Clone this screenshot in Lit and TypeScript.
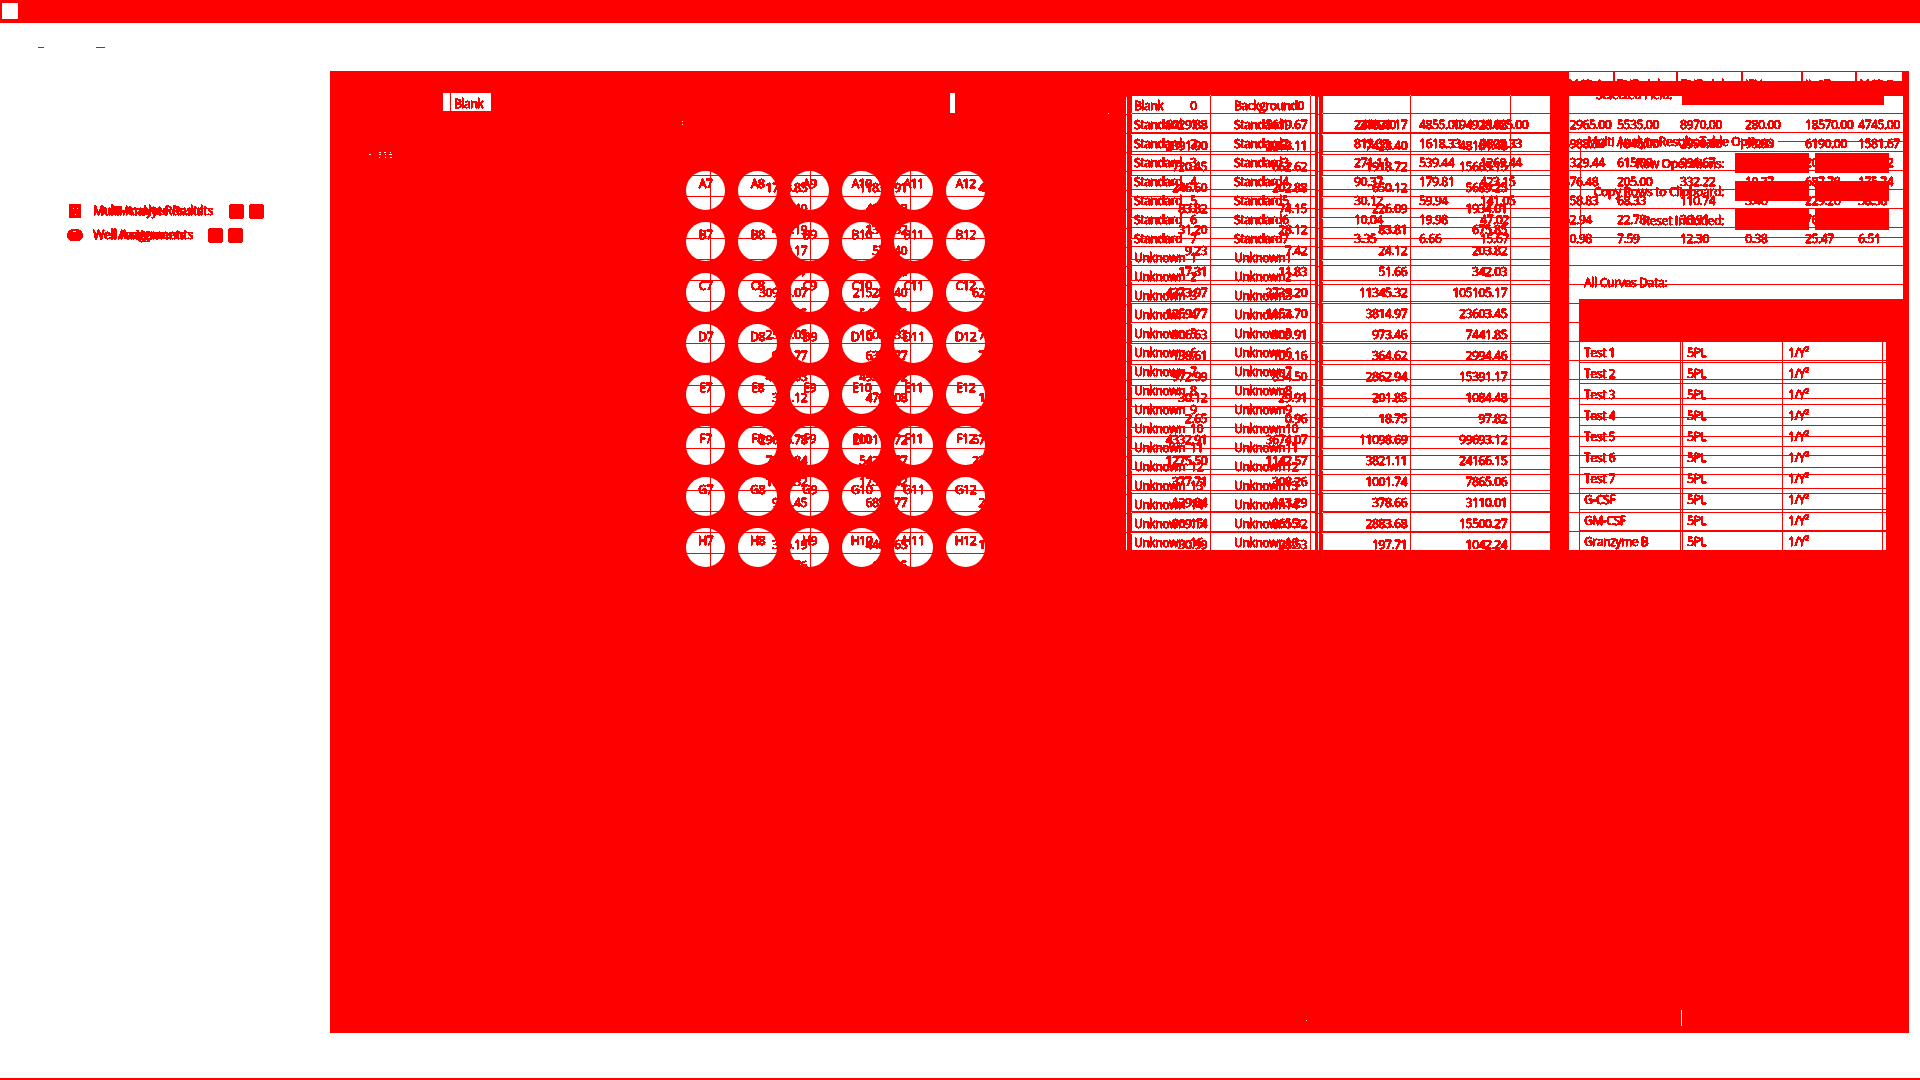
import { LitElement, html, css, svg } from "lit";
import { customElement } from "lit/decorators.js";

const SAMPLES: string[][] = [
  ["Blank", "0", "Background0"],
  ...Array.from({ length: 7 }, (_, i) => ["Standard", `${i + 1}`, `Standard${i + 1}`]),
  ...Array.from({ length: 16 }, (_, i) => ["Unknown", `${i + 1}`, `Unknown${i + 1}`]),
];

// Seven dilution rows, nine analytes each.
const DILUTIONS: string[][] = [
  ["2440.00", "4855.00", "11425.00", "12965.00", "5535.00", "8970.00", "280.00", "18570.00", "4745.00"],
  ["813.33", "1618.33", "3808.33", "4988.33", "1845.00", "2990.00", "93.33", "6190.00", "1581.67"],
  ["271.11", "539.44", "1269.44", "1329.44", "615.00", "996.67", "31.11", "2063.33", "527.22"],
  ["90.37", "179.81", "423.15", "476.48", "205.00", "332.22", "10.37", "687.78", "175.74"],
  ["30.12", "59.94", "141.05", "158.83", "68.33", "110.74", "3.46", "229.26", "58.58"],
  ["10.04", "19.98", "47.02", "52.94", "22.78", "36.91", "1.15", "76.42", "19.53"],
  ["3.35", "6.66", "15.67", "10.98", "7.59", "12.30", "0.38", "25.47", "6.51"],
];

// Columns of the result grid, 100px each, the first one ends at x = 710.
const COLS: string[][] = [
  [],
  ["", "", "", "1713.85", "501.40", "419.19", "83.17", "22.17", "30914.07", "8734.65", "2514.05", "961.77", "4418.63", "361.12", "", "29616.78", "7251.84", "1982.32", "931.45", "", "355.19", "52.76"],
  ["", "", "", "11835.91", "4812.38", "1345.32", "571.40", "162.36", "215284.40", "54170.15", "16004.33", "6371.77", "49310.62", "4709.08", "", "200117.72", "54230.77", "17362.42", "6851.77", "", "4409.65", "613.35"],
  ["", "", "", "41.23", "", "", "", "", "621.40", "", "71.22", "72.10", "17.31", "10.24", "", "571.36", "231.40", "", "26.15", "", "15.60"],
  [],
  ["6029.88", "2391.90", "720.45", "246.60", "83.82", "31.20", "9.23", "17.31", "4373.97", "1259.77", "306.63", "138.61", "972.99", "30.12", "2.65", "4332.91", "1275.50", "377.71", "129.84", "909.14", "30.99"],
  ["5619.67", "2263.11", "662.62", "202.88", "74.15", "28.12", "7.42", "11.83", "3739.20", "1153.70", "309.91", "109.16", "834.50", "29.91", "0.96", "3674.07", "1142.57", "308.26", "113.29", "865.32", "28.53"],
  ["21828.17", "7423.40", "1918.72", "650.12", "226.09", "83.81", "24.12", "51.66", "11345.32", "3814.97", "973.46", "364.62", "2862.94", "201.85", "18.75", "11098.69", "3821.11", "1001.74", "378.66", "2883.68", "197.71"],
  ["194928.98", "48161.48", "15665.15", "5689.25", "1934.01", "675.85", "203.82", "342.03", "105105.17", "23603.45", "7441.85", "2994.46", "15391.17", "1084.48", "97.82", "99693.12", "24166.15", "7865.06", "3110.01", "15500.27", "1042.24"],
  [],
];

const WELLS = [..."ABCDEFGH"].flatMap((r) => [7, 8, 9, 10, 11, 12].map((c) => `${r}${c}`));
const CURVES = ["Test 1", "Test 2", "Test 3", "Test 4", "Test 5", "Test 6", "Test 7", "G-CSF", "GM-CSF", "Granzyme B"];

@customElement("app-root")
export class AppRoot extends LitElement {
  static styles = css`
    :host {
      display: block;
      --red: #ff0000;
      font: 12px/19px "Open Sans", "Noto Sans", sans-serif;
      letter-spacing: -0.39px;
      color: var(--red);
      -webkit-text-stroke: 0.35px var(--red);
      text-shadow: 0.6px 0 0 var(--red);
    }
    * { box-sizing: border-box; }
    .page {
      display: grid;
      grid-template-rows: 23px 48px 962px 45px 2px;
      width: 1920px;
      height: 1080px;
      overflow: hidden;
      background: #fff;
    }
    .bar { background: var(--red); padding: 3px 2px; }
    .logo { width: 16px; height: 16px; background: #fff; }
    .menu { display: flex; gap: 52px; padding: 24px 0 0 38px; }
    .dash { width: 6px; height: 1px; background: var(--red); }
    .dash.wide { width: 9px; }
    .body { display: grid; grid-template-columns: 330px 1579px 11px; }
    .nav { padding: 128px 0 0 67px; filter: url(#solid); }
    .item { display: flex; height: 24px; align-items: center; }
    .glyph { width: 16px; height: 16px; flex: none; }
    .name { display: grid; margin-left: 10px; margin-right: 12px; line-height: 20px; white-space: pre; }
    .name span { grid-area: 1 / 1; }
    .name .b { letter-spacing: 0.14px; }
    .pill { width: 15px; height: 15px; border-radius: 4px; background: var(--red); margin-right: 5px; flex: none; }
    .stage { position: relative; overflow: hidden; background: var(--red); height: 962px; }
    .ink { position: absolute; inset: 0; filter: url(#solid); }
    .w, .k, .layer { position: absolute; }
    .w { background: #fff; }
    .k { background: var(--red); }
    .t { position: absolute; white-space: pre; }
    .wells {
      position: absolute; left: 356px; top: 100px;
      display: grid; grid-template-columns: repeat(6, 39px); column-gap: 13px;
      grid-auto-rows: 39px; row-gap: 12px;
    }
    .well { border-radius: 50%; background: #fff; }
    .wells.text { text-align: center; line-height: 26px; }
    .wells.text .well { background: none; }
    .samples { position: absolute; left: 797px; top: 24px; width: 776px; }
    .srow { height: 19px; border-bottom: 1px solid var(--red); display: grid; grid-template-columns: 7px 56px 44px 300px; line-height: 21px; white-space: pre; }
    .dilutions { position: absolute; left: 1024px; top: 44px; }
    .drow { height: 19px; display: grid; grid-template-columns: 65px 61px 83px 54px 63px 65px 60px 53px 60px; line-height: 20px; }
    .results { position: absolute; left: 281px; top: 42px; width: 939px; display: flex; overflow: hidden; }
    .col { flex: 0 0 100px; border-right: 1px solid var(--red); }
    .cell { height: 21px; border-bottom: 1px solid var(--red); line-height: 23px; text-align: right; padding-right: 3px; }
    .rhead { position: absolute; left: 281px; top: 42px; width: 939px; height: 1px; background: var(--red); }
    .vstart { position: absolute; top: 25px; left: 880px; width: 301px; height: 18px; display: flex; gap: 99px; }
    .vstart i { width: 1px; background: var(--red); }
    .curves { position: absolute; left: 1249px; top: 271px; width: 307px; }
    .crow { height: 21px; border-bottom: 1px solid var(--red); display: grid; grid-template-columns: 103px 101px 95px; padding-left: 5px; line-height: 22px; white-space: pre; }
    .rule1 { background: linear-gradient(#fff 18px, #f00 18px) 0 -1px / 1px 19px; }
    .dots { background: linear-gradient(#fff 1px, transparent 1px) 0 0 / 1px 21px; }
    .foot { background: var(--red); }
    .defs { position: absolute; width: 0; height: 0; }
  `;

  // Rectangle given in page coordinates: left, top, right, bottom.
  private box(kind: string, x: number, y: number, r: number, b: number) {
    return html`<div class=${kind} style="left:${x - 330}px;top:${y - 71}px;width:${r - x}px;height:${b - y}px"></div>`;
  }

  // Text whose 20px line box is centred on cy; x is its left edge, or its right edge when right is set.
  private txt(s: string, x: number, cy: number, right = false, ls = -0.39) {
    const pos = right ? `right:${1909 - x}px` : `left:${x - 330}px`;
    return html`<div class="t" style="${pos};top:${cy - 81}px;line-height:20px;letter-spacing:${ls}px">${s}</div>`;
  }

  private item(name: string, icon: unknown, gap: number) {
    return html`<div class="item">
      <svg class="glyph" viewBox="0 0 16 16">${icon}</svg>
      <div class="name" style="width:${gap}px"><span>${name}</span><span class="b">${name}</span></div>
      <div class="pill"></div><div class="pill"></div>
    </div>`;
  }

  render() {
    const report = svg`<path fill="#f00" fill-rule="evenodd" d="M2.5 1h11l.5 1v13H2V2zM6 5v1h1v-1h3v1h1V5zM8 11h1v1H8z"/>`;
    const plate = svg`<path fill="#f00" fill-rule="evenodd" d="M6 2h4l4 2 2 3v3l-3 3-2 1H5l-2-1-3-3V7l2-3zM5 5.5h6v-1H9v-1H6v1H5z"/>`;
    return html`
      <svg class="defs"><filter id="solid" x="0" y="0" width="100%" height="100%" color-interpolation-filters="sRGB">
        <feComponentTransfer><feFuncA type="discrete" tableValues="0 0 1 1 1 1 1 1 1 1"></feFuncA></feComponentTransfer>
        <feColorMatrix values="0 0 0 0 1  0 0 0 0 0  0 0 0 0 0  0 0 0 1 0"></feColorMatrix>
      </filter></svg>
      <div class="page">
        <div class="bar"><div class="logo"></div></div>
        <div class="menu"><div class="dash"></div><div class="dash wide"></div></div>
        <div class="body">
          <div class="nav">
            ${this.item("Multi-Analyte Results", report, 124)}
            ${this.item("Well Assignments", plate, 103)}
          </div>
          <div class="stage">
            ${this.box("w", 443, 93, 491, 111)}
            ${this.box("w", 950, 93, 955, 113)}
            <div class="wells">${WELLS.map(() => html`<div class="well"></div>`)}</div>
            ${this.box("w", 1132, 96, 1315, 550)}
            ${this.box("w", 1323, 96, 1550, 550)}
            ${this.box("w", 1569, 72, 1902, 81)}
            ${this.box("w", 1569, 96, 1903, 299)}
            ${this.box("w", 1569, 299, 1579, 550)}
            ${this.box("w", 1579, 342, 1886, 550)}

            <div class="ink">
              ${this.box("k", 450, 93, 451, 111)}
              ${this.txt("Blank", 454, 104)}
              <div class="samples">
                ${SAMPLES.map(([a, n, c]) => html`<div class="srow"><i></i><span>${a}</span><span>${n}</span><span>${c}</span></div>`)}
              </div>
              <div class="dilutions">
                ${DILUTIONS.map((r) => html`<div class="drow">${r.map((v) => html`<span>${v}</span>`)}</div>`)}
              </div>
              <div class="rhead"></div>
              <div class="results">
                ${COLS.map((c) => html`<div class="col">${Array.from({ length: 22 }, (_, i) => html`<div class="cell">${c[i] ?? ""}</div>`)}</div>`)}
              </div>
              <div class="vstart"><i></i><i></i><i></i><i></i></div>
              <div class="wells text">${WELLS.map((w) => html`<div class="well">${w}</div>`)}</div>

              ${[1613, 1676, 1741, 1801, 1855].map((x) => this.box("k", x, 71, x + 2, 81))}
              ${([["MCP-1", 1568], ["TNF-alpha", 1617], ["TNF-alpha", 1681], ["IFN-γ", 1745], ["IL-17", 1805], ["MCP-2", 1859]] as [string, number][]).map(([s, x]) => this.txt(s, x, 85))}
              ${this.txt("Selected Field:", 1672, 95, true, -0.25)}
              ${this.box("k", 1682, 96, 1884, 105)}

              ${this.txt("Multi Analyte Results Table Options", 1587, 142, false, -0.33)}
              ${this.box("k", 1778, 141, 1903, 142)}
              ${this.box("k", 1580, 147, 1581, 237)}
              ${this.box("k", 1580, 237, 1903, 238)}
              ${this.txt("Row Operations:", 1724, 164, true, -0.3)}
              ${this.txt("Copy Rows to Clipboard:", 1724, 192, true, -0.25)}
              ${this.txt("Reset Included:", 1724, 221, true, -0.25)}
              ${this.box("k", 1735, 153, 1809, 173)}
              ${this.box("k", 1815, 153, 1889, 173)}
              ${this.box("k", 1735, 181, 1809, 201)}
              ${this.box("k", 1815, 181, 1889, 201)}
              ${this.box("k", 1735, 209, 1809, 230)}
              ${this.box("k", 1815, 209, 1889, 230)}
              ${this.txt("All Curves Data:", 1584, 283, false, -0.28)}
              <div class="curves">
                ${CURVES.map((n) => html`<div class="crow"><span>${n}</span><span>5PL</span><span>1/Y²</span></div>`)}
              </div>
              ${[1579, 1680, 1682, 1782, 1882].map((x) => this.box("k", x, 342, x + 1, 550))}
            </div>

            ${this.box("layer rule1", 1126, 97, 1127, 550)}
            ${this.box("layer rule1", 1318, 97, 1319, 550)}
            ${this.box("layer dots", 1131, 113, 1132, 550)}
            ${this.box("layer dots", 1322, 113, 1323, 550)}
            ${[1210, 1310, 1410, 1510].map((x) => this.box("w", x, 95, x + 1, 96))}
            ${this.box("w", 682, 121, 683, 122)}
            ${this.box("w", 682, 124, 683, 125)}
            ${this.box("w", 369, 154, 371, 155)}
            ${[[379, 152, 2], [384, 152, 2], [390, 152, 1], [379, 154, 2], [385, 154, 1], [389, 154, 3], [379, 157, 1], [385, 157, 1], [390, 157, 2]].map(([x, y, w]) => this.box("w", x, y, x + w, y + 1))}
            ${this.box("w", 1108, 113, 1109, 114)}
            ${this.box("w", 1306, 1020, 1307, 1021)}
            ${this.box("w", 1681, 1010, 1682, 1026)}
          </div>
        </div>
        <div></div>
        <div class="foot"></div>
      </div>`;
  }
}
